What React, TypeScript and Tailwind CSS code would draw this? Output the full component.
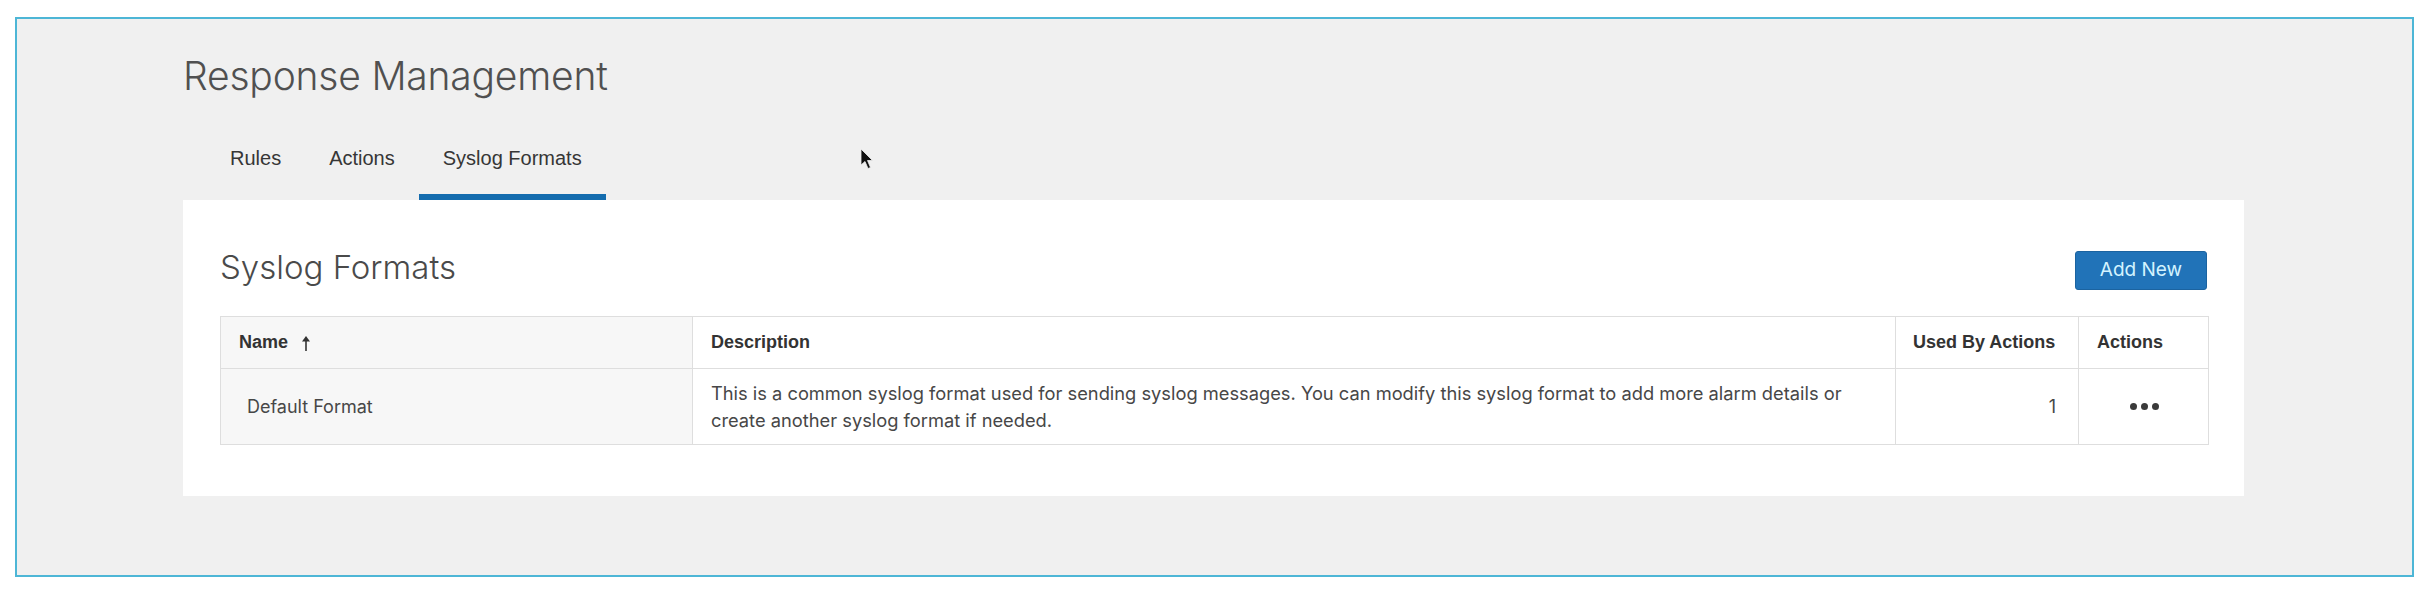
import React from "react";

const inter = "font-['Inter','Liberation_Sans',sans-serif]";
const lib = "font-['Liberation_Sans','Arial',sans-serif]";

function SortArrow() {
  return (
    <svg width="10" height="15" viewBox="0 0 10 15" className="ml-[13px] mt-[1px]">
      <path d="M5 0 L9 5.5 L1 5.5 Z" fill="#333" />
      <line x1="5" y1="4" x2="5" y2="15" stroke="#333" strokeWidth="1.6" />
    </svg>
  );
}

function Cursor() {
  return (
    <svg
      width="14"
      height="22"
      viewBox="0 0 14 22"
      className="absolute left-[843px] top-[129px]"
    >
      <path
        d="M1 1 L1 17 L5 13.5 L8 20.5 L10.5 19.5 L7.5 12.5 L12.5 12.5 Z"
        fill="#111"
        stroke="#f0f0f0"
        strokeWidth="0.8"
        strokeLinejoin="round"
      />
    </svg>
  );
}

export default function App() {
  const tabs = ["Rules", "Actions", "Syslog Formats"];
  return (
    <div className="w-[2431px] h-[591px] bg-white overflow-hidden">
      <div className="relative ml-[15px] mt-[17px] w-[2399px] h-[560px] border-2 border-[#4db6d6] bg-[#f0f0f0]">
        <Cursor />
        <div className="pl-[166px]">
          <h1
            className={`${inter} pt-[35px] text-[39px] leading-[44px] font-light text-[#505050] tracking-[-0.2px]`}
          >
            Response Management
          </h1>
          <div className="mt-[48px] ml-[23px] flex">
            {tabs.map((t, i) => (
              <div
                key={t}
                className={`${lib} px-6 pb-[24px] text-[20px] leading-[24px] text-[#363636] border-b-[6px] ${
                  i === 2 ? "border-[#146cae]" : "border-transparent"
                }`}
              >
                {t}
              </div>
            ))}
          </div>
          <div className="w-[2061px] h-[296px] bg-white px-[37px] pt-[49px]">
            <div className="flex items-start justify-between">
              <h2
                className={`${inter} text-[33px] leading-[36px] font-light text-[#4a4a4a]`}
              >
                Syslog Formats
              </h2>
              <button
                className={`${inter} mt-[2px] h-[39px] w-[132px] rounded-[3px] bg-[#2173b8] border border-[#1b63a0] text-[19px] text-[#d4f3ff] flex items-center justify-center`}
              >
                Add New
              </button>
            </div>
            <table className="mt-[26px] w-[1988px] table-fixed border-collapse border border-[#dedede]">
              <colgroup>
                <col className="w-[472px]" />
                <col className="w-[1203px]" />
                <col className="w-[183px]" />
                <col className="w-[130px]" />
              </colgroup>
              <thead>
                <tr className={`${lib} h-[52px] text-[18px] font-bold text-[#333]`}>
                  <th className="bg-[#f7f7f7] border border-[#dedede] pl-[18px] text-left font-bold">
                    <span className="inline-flex items-center">
                      Name
                      <SortArrow />
                    </span>
                  </th>
                  <th className="border border-[#dedede] pl-[18px] text-left font-bold">
                    Description
                  </th>
                  <th className="border border-[#dedede] pl-[17px] text-left font-bold">
                    Used By Actions
                  </th>
                  <th className="border border-[#dedede] pl-[18px] text-left font-bold">
                    Actions
                  </th>
                </tr>
              </thead>
              <tbody>
                <tr className={`${inter} h-[76px] text-[18px] text-[#474747]`}>
                  <td className="bg-[#f7f7f7] border border-[#dedede] pl-[26px]">
                    Default Format
                  </td>
                  <td className="border border-[#dedede] pl-[18px] leading-[27px] text-[18.3px]">
                    This is a common syslog format used for sending syslog messages. You can
                    modify this syslog format to add more alarm details or
                    <br />
                    create another syslog format if needed.
                  </td>
                  <td className="border border-[#dedede] pr-[22px] text-right">1</td>
                  <td className="border border-[#dedede]">
                    <div className="flex justify-center gap-[4px] pl-[1px]">
                      <span className="w-[7px] h-[7px] rounded-full bg-[#3a3a3a]" />
                      <span className="w-[7px] h-[7px] rounded-full bg-[#3a3a3a]" />
                      <span className="w-[7px] h-[7px] rounded-full bg-[#3a3a3a]" />
                    </div>
                  </td>
                </tr>
              </tbody>
            </table>
          </div>
        </div>
      </div>
    </div>
  );
}
